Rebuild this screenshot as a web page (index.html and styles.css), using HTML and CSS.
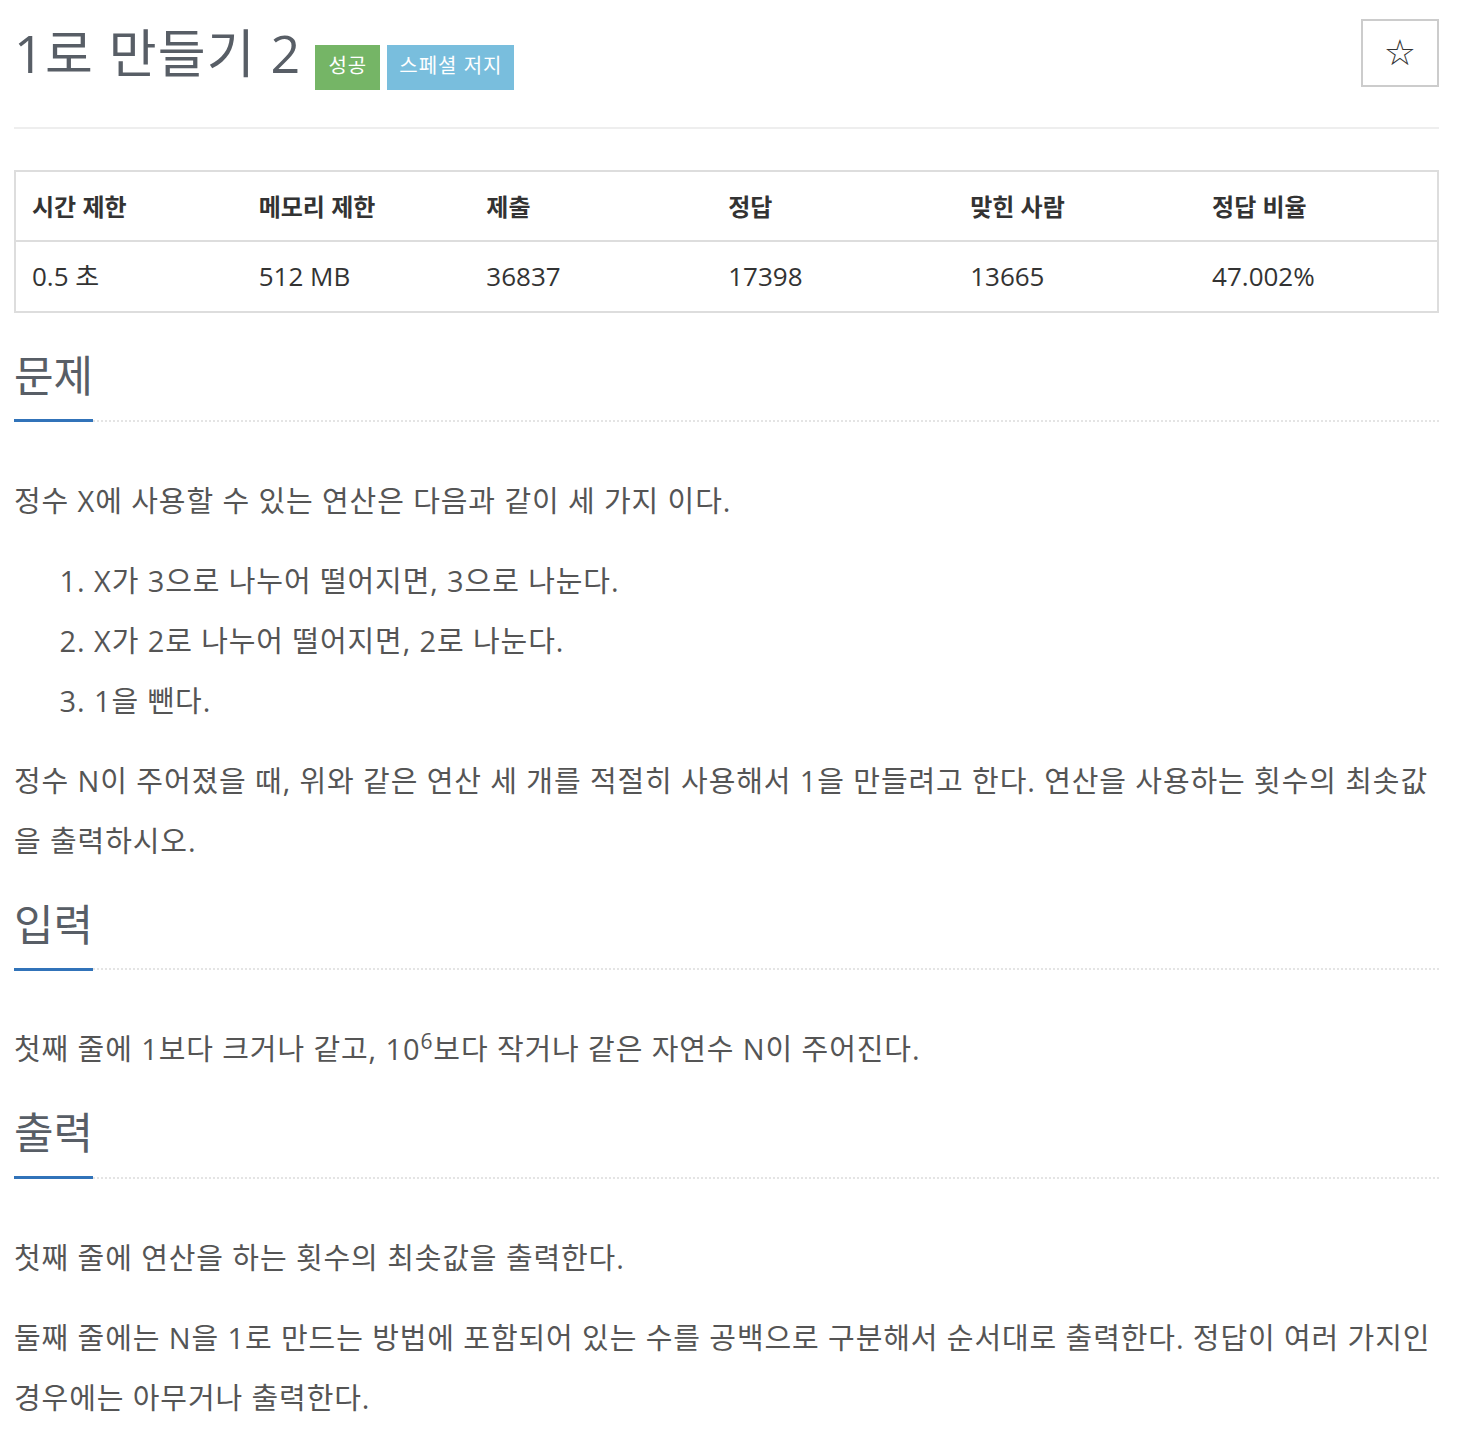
FILE: index.html
```html
<!DOCTYPE html>
<html lang="ko">
<head>
    <meta charset="UTF-8">
    <title>1로 만들기 2</title>
    <link rel="stylesheet" href="styles.css">
</head>
<body>
    <div class="container">
        <div class="page-header">
            <h1 class="title-row">
                <span id="problem_title">1로 만들기 2</span>
                <span class="label label-success">성공</span>
                <span class="label label-info">스페셜 저지</span>
            </h1>
            <button class="star-btn">☆</button>
        </div>

        <table class="problem-info">
            <thead>
                <tr>
                    <th class="w16">시간 제한</th>
                    <th class="w16">메모리 제한</th>
                    <th class="w17">제출</th>
                    <th class="w17">정답</th>
                    <th class="w17">맞힌 사람</th>
                    <th class="w17">정답 비율</th>
                </tr>
            </thead>
            <tbody>
                <tr>
                    <td>0.5 초</td>
                    <td>512 MB</td>
                    <td>36837</td>
                    <td>17398</td>
                    <td>13665</td>
                    <td>47.002%</td>
                </tr>
            </tbody>
        </table>

        <section class="problem-section">
            <div class="headline">
                <h2>문제</h2>
            </div>
            <div class="problem-text">
                <p>정수 X에 사용할 수 있는 연산은 다음과 같이 세 가지 이다.</p>
                <ol>
                    <li>X가 3으로 나누어 떨어지면, 3으로 나눈다.</li>
                    <li>X가 2로 나누어 떨어지면, 2로 나눈다.</li>
                    <li>1을 뺀다.</li>
                </ol>
                <p>정수 N이 주어졌을 때, 위와 같은 연산 세 개를 적절히 사용해서 1을 만들려고 한다. 연산을 사용하는 횟수의 최솟값을 출력하시오.</p>
            </div>
        </section>

        <section class="problem-section">
            <div class="headline">
                <h2>입력</h2>
            </div>
            <div class="problem-text">
                <p>첫째 줄에 1보다 크거나 같고, 10<sup>6</sup>보다 작거나 같은 자연수 N이 주어진다.</p>
            </div>
        </section>

        <section class="problem-section">
            <div class="headline">
                <h2>출력</h2>
            </div>
            <div class="problem-text">
                <p>첫째 줄에 연산을 하는 횟수의 최솟값을 출력한다.</p>
                <p>둘째 줄에는 N을 1로 만드는 방법에 포함되어 있는 수를 공백으로 구분해서 순서대로 출력한다. 정답이 여러 가지인 경우에는 아무거나 출력한다.</p>
            </div>
        </section>
    </div>
</body>
</html>
```

FILE: styles.css
```css
body {
    margin: 0;
    background: #fff;
    font-family: 'Open Sans', 'Noto Sans CJK KR', sans-serif;
    color: #555;
}

.container {
    width: 1425px;
    margin-left: 14px;
}

/* header */
.page-header {
    display: flex;
    justify-content: space-between;
    align-items: flex-start;
    padding-top: 19px;
    padding-bottom: 37px;
    border-bottom: 2px solid #eee;
}

.title-row {
    display: flex;
    align-items: baseline;
    gap: 7px;
    margin: 0;
    font-weight: 400;
    line-height: 68px;
}

#problem_title {
    font-size: 52px;
    letter-spacing: 1.2px;
    color: #585e66;
    margin-right: 7px;
}

.label {
    display: inline-block;
    font-size: 20px;
    letter-spacing: 1px;
    line-height: 41px;
    padding: 0 12px 4px;
    color: #fff;
}

.label-success {
    background: #75b566;
    padding: 0 13px 4px;
}

.label-info {
    background: #79bedd;
}

.star-btn {
    width: 78px;
    height: 68px;
    border: 2px solid #ccc;
    background: #fff;
    color: #333;
    font-family: 'DejaVu Sans', sans-serif;
    font-size: 36px;
    line-height: 1;
    padding: 0;
    cursor: pointer;
}

/* info table */
.problem-info {
    width: 100%;
    margin: 41px 0 38px;
    border-collapse: collapse;
    border: 2px solid #ddd;
    color: #333;
}

.problem-info th,
.problem-info td {
    text-align: left;
    padding: 20px 16px;
    line-height: 29px;
    height: 29px;
}

.problem-info th {
    font-size: 24px;
    font-weight: 700;
    padding-bottom: 19px;
    border-bottom: 2px solid #ddd;
}

.problem-info td {
    font-size: 26px;
}

.w16 { width: 16%; }
.w17 { width: 17%; }

/* sections */
.problem-section {
    margin-top: 29px;
}

.headline {
    display: flex;
    border-bottom: 2px dotted #e4e4e4;
}

.headline h2 {
    margin: 0 0 -2.5px;
    font-size: 43px;
    font-weight: 400;
    line-height: 50px;
    color: #585e66;
    padding-bottom: 18px;
    border-bottom: 3px solid #3173b9;
}

.problem-text {
    padding-top: 49px;
    font-size: 29px;
    letter-spacing: 0.9px;
    line-height: 60px;
}

.problem-text p {
    margin: 0 0 20px;
}

.problem-text ol {
    margin: 0 0 20px;
    padding-left: 80px;
}

.problem-text sup {
    line-height: 0;
    font-size: 21px;
}
```
